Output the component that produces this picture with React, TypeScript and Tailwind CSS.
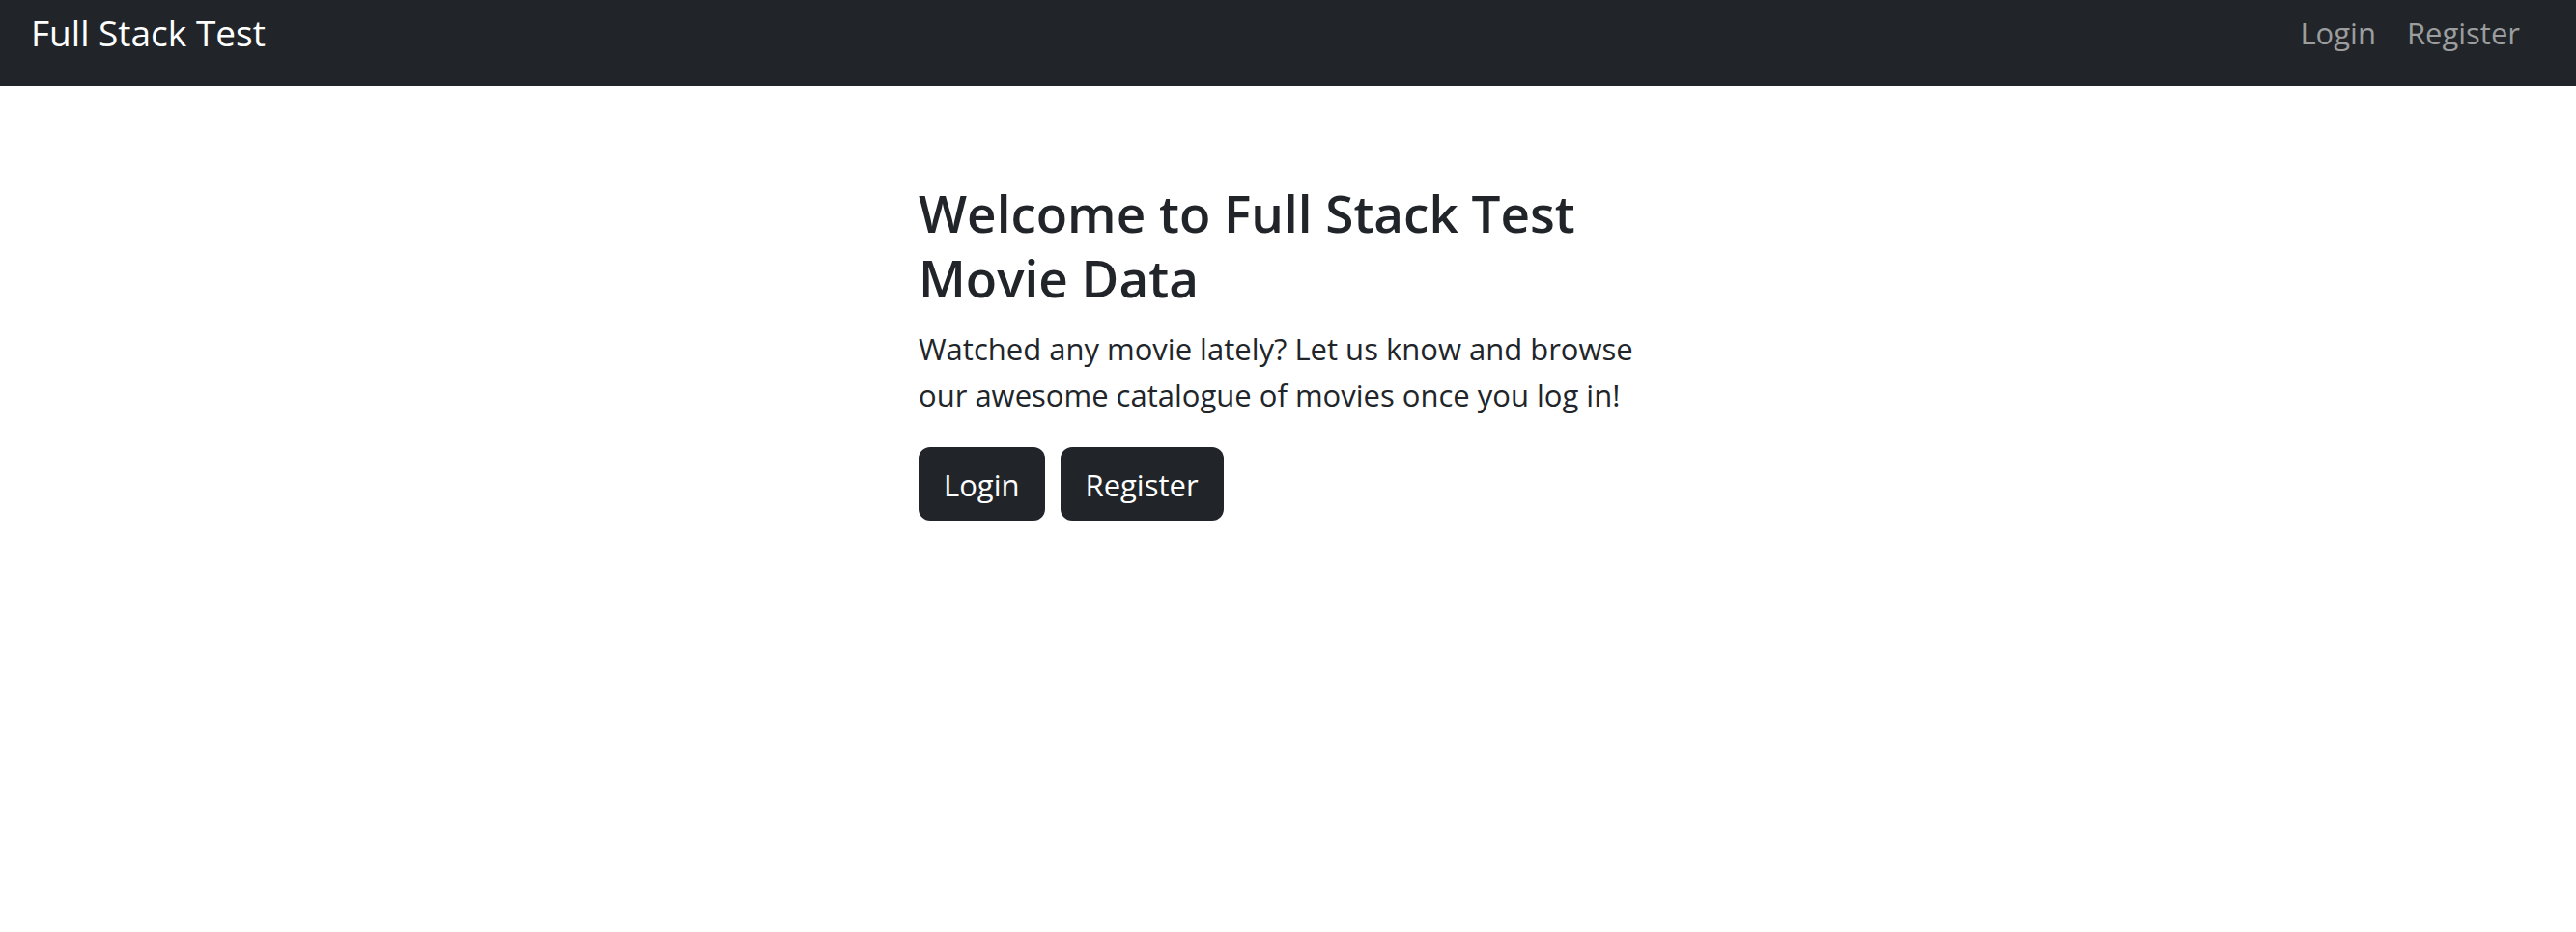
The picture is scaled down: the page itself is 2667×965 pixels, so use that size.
const links = [
  { label: "Login", href: "#login" },
  { label: "Register", href: "#register" },
];

function NavBar() {
  return (
    <header className="flex h-[89px] items-start justify-between bg-[#212529] pl-8 pr-[42px]">
      <a href="#home" className="pt-1 text-[37px] leading-[60px] text-white">
        Full Stack Test
      </a>
      <nav className="flex pt-[10px]">
        {links.map((link) => (
          <a
            key={link.label}
            href={link.href}
            className="px-4 text-[31px] leading-[48px] text-[#9b9d9e]"
          >
            {link.label}
          </a>
        ))}
      </nav>
    </header>
  );
}

export default function App() {
  return (
    <div className="min-h-screen bg-white font-['Open_Sans','Noto_Sans',sans-serif] text-[#212529]">
      <NavBar />
      <main className="mx-auto w-full max-w-[765px] pt-[98px]">
        <h1 className="mb-4 text-[53px] font-semibold leading-[67px]">
          Welcome to Full Stack Test Movie Data
        </h1>
        <p className="mb-[30px] text-[31px] leading-[48px]">
          Watched any movie lately? Let us know and browse our awesome catalogue of movies once you
          log in!
        </p>
        <div className="flex gap-4">
          {links.map((link) => (
            <button
              key={link.label}
              type="button"
              className="rounded-xl bg-[#212529] px-[26px] pb-[13px] pt-[15px] text-[31px] leading-[48px] text-white"
            >
              {link.label}
            </button>
          ))}
        </div>
      </main>
    </div>
  );
}
